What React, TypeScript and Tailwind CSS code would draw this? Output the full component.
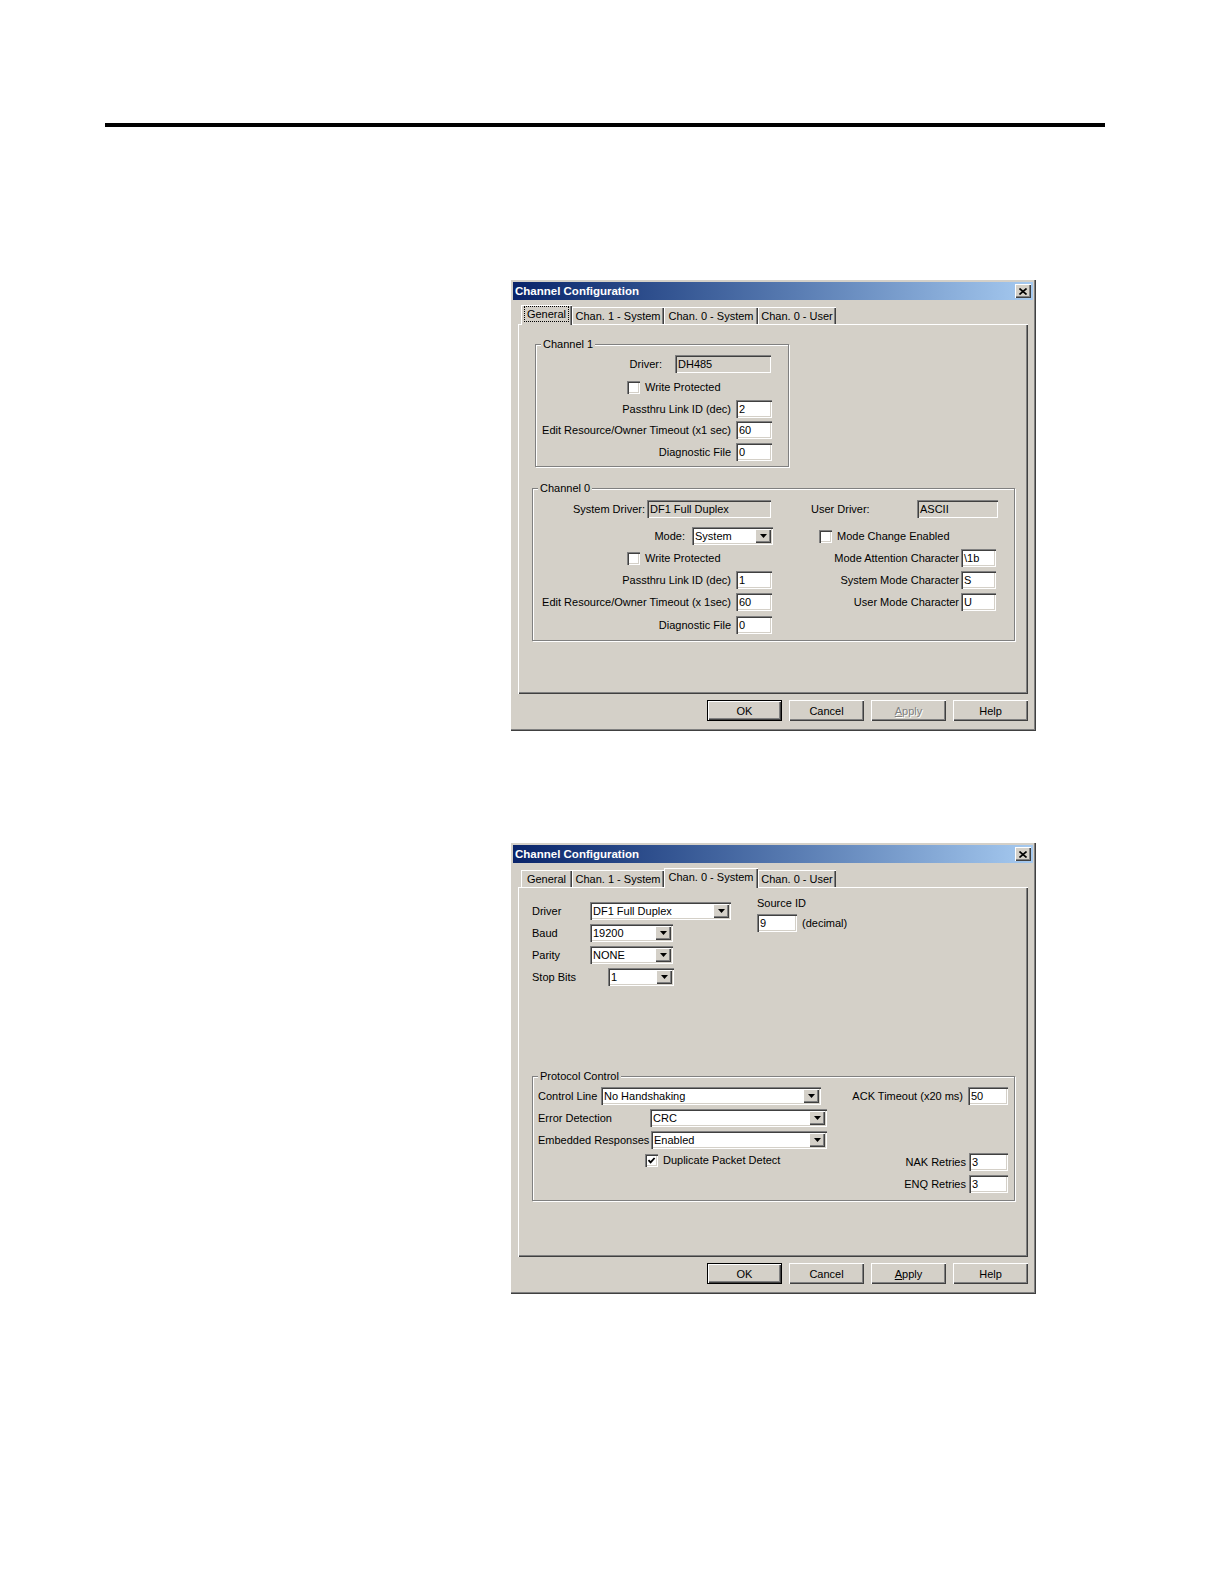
import type { ReactNode } from 'react';

const RAISED =
  'shadow-[inset_1px_1px_0_#ffffff,inset_-1px_-1px_0_#404040,inset_-2px_-2px_0_#808080]';
const SUNKEN =
  'shadow-[inset_1px_1px_0_#808080,inset_2px_2px_0_#404040,inset_-1px_-1px_0_#ffffff,inset_-2px_-2px_0_#d4d0c8]';

const TABS = [
  { label: 'General', w: 'w-[51px]' },
  { label: 'Chan. 1 - System', w: 'w-[92px]' },
  { label: 'Chan. 0 - System', w: 'w-[94px]' },
  { label: 'Chan. 0 - User', w: 'w-[78px]' },
];

function TextField({ value, w, disabled }: { value: string; w: string; disabled?: boolean }) {
  return (
    <div
      className={`h-[18px] ${w} ${SUNKEN} ${disabled ? 'bg-[#d4d0c8]' : 'bg-white'} flex items-center pl-[3px] shrink-0`}
    >
      {value}
    </div>
  );
}

function DropArrow() {
  return (
    <div className={`w-[16px] h-[14px] mr-[2px] bg-[#d4d0c8] ${RAISED} flex items-center justify-center shrink-0`}>
      <svg width="7" height="4" viewBox="0 0 7 4">
        <path d="M0 0h7L3.5 4z" fill="#000" />
      </svg>
    </div>
  );
}

function Select({ value, w }: { value: string; w: string }) {
  return (
    <div className={`h-[18px] ${w} ${SUNKEN} bg-white flex items-center pl-[3px] shrink-0`}>
      <span className="flex-1 truncate">{value}</span>
      <DropArrow />
    </div>
  );
}

function Checkbox({ checked, label }: { checked?: boolean; label: string }) {
  return (
    <div className="flex items-center gap-[5px]">
      <div className={`w-[13px] h-[13px] bg-white ${SUNKEN} flex items-center justify-center`}>
        {checked && (
          <svg width="9" height="9" viewBox="0 0 9 9">
            <path d="M1.5 4.2L3.6 6.4L7.6 2" fill="none" stroke="#000" strokeWidth="1.8" />
          </svg>
        )}
      </div>
      <span>{label}</span>
    </div>
  );
}

function GroupBox({ title, className, children }: { title: string; className: string; children: ReactNode }) {
  return (
    <div
      className={`relative border border-[#808080] shadow-[inset_1px_1px_0_#ffffff,1px_1px_0_#ffffff] ${className}`}
    >
      <span className="absolute -top-[8px] left-[5px] px-[2px] bg-[#d4d0c8] leading-[14px]">{title}</span>
      {children}
    </div>
  );
}

function Button({ label, isDefault, disabled }: { label: ReactNode; isDefault?: boolean; disabled?: boolean }) {
  return (
    <div
      className={`w-[75px] h-[21px] flex items-center justify-center bg-[#d4d0c8] ${RAISED} ${
        isDefault ? 'border border-black' : ''
      } ${disabled ? 'text-[#808080] [text-shadow:1px_1px_0_#ffffff]' : ''}`}
    >
      {label}
    </div>
  );
}

function Dialog({ active, applyEnabled, children }: { active: number; applyEnabled?: boolean; children: ReactNode }) {
  return (
    <div className={`w-[526px] h-[452px] bg-[#d4d0c8] p-[3px] flex flex-col ${RAISED}`}>
      <div className="h-[18px] bg-linear-to-r from-[#0a246a] to-[#a6caf0] flex items-center pl-[2px]">
        <span className="text-white font-bold text-[11.5px]">Channel Configuration</span>
        <div className={`ml-auto mr-[2px] w-[16px] h-[14px] bg-[#d4d0c8] ${RAISED} flex items-center justify-center`}>
          <svg width="8" height="7" viewBox="0 0 8 7">
            <path d="M0.5 0.5L7.5 6.5M7.5 0.5L0.5 6.5" stroke="#000" strokeWidth="1.6" />
          </svg>
        </div>
      </div>

      <div className="mt-[7px] ml-[8px] h-[17px] flex items-end relative z-10">
        {TABS.map((t, i) => (
          <div
            key={t.label}
            className={`${t.w} flex items-center justify-center bg-[#d4d0c8] shadow-[inset_1px_1px_0_#ffffff,inset_-1px_0_0_#404040,inset_-2px_0_0_#808080] ${
              i === active ? 'h-[20px] -mb-[1px] pb-[3px]' : 'h-[17px]'
            }`}
          >
            <span className={i === active && active === 0 ? 'outline-1 outline-dotted outline-black px-[2px]' : ''}>
              {t.label}
            </span>
          </div>
        ))}
      </div>

      <div className={`ml-[5px] w-[510px] h-[370px] flex flex-col ${RAISED}`}>{children}</div>

      <div className="mt-[6px] w-[515px] flex justify-end gap-[7px]">
        <Button label="OK" isDefault />
        <Button label="Cancel" />
        <Button
          label={
            <span>
              <span className="underline">A</span>pply
            </span>
          }
          disabled={!applyEnabled}
        />
        <Button label="Help" />
      </div>
    </div>
  );
}

function GeneralPage() {
  return (
    <>
      <GroupBox title="Channel 1" className="mt-[20px] ml-[17px] w-[254px] h-[123px]">
        <div className="mt-[10px] flex items-center">
          <div className="w-[126px] text-right">Driver:</div>
          <div className="ml-[13px]">
            <TextField value="DH485" w="w-[96px]" disabled />
          </div>
        </div>
        <div className="mt-[5px] h-[18px] flex items-center ml-[91px]">
          <Checkbox label="Write Protected" />
        </div>
        <div className="mt-[4px] flex items-center">
          <div className="w-[195px] text-right">Passthru Link ID (dec)</div>
          <div className="ml-[5px]">
            <TextField value="2" w="w-[36px]" />
          </div>
        </div>
        <div className="mt-[3px] flex items-center">
          <div className="w-[195px] text-right whitespace-nowrap">Edit Resource/Owner Timeout (x1 sec)</div>
          <div className="ml-[5px]">
            <TextField value="60" w="w-[36px]" />
          </div>
        </div>
        <div className="mt-[4px] flex items-center">
          <div className="w-[195px] text-right">Diagnostic File</div>
          <div className="ml-[5px]">
            <TextField value="0" w="w-[36px]" />
          </div>
        </div>
      </GroupBox>

      <GroupBox title="Channel 0" className="mt-[21px] ml-[14px] w-[483px] h-[153px]">
        <div className="mt-[11px] flex items-center">
          <div className="w-[278px] flex items-center">
            <div className="w-[112px] text-right">System Driver:</div>
            <div className="ml-[2px]">
              <TextField value="DF1 Full Duplex" w="w-[124px]" disabled />
            </div>
          </div>
          <div className="w-[106px]">User Driver:</div>
          <TextField value="ASCII" w="w-[81px]" disabled />
        </div>

        <div className="mt-[9px] flex items-center">
          <div className="w-[278px] flex items-center">
            <div className="w-[152px] text-right">Mode:</div>
            <div className="ml-[7px]">
              <Select value="System" w="w-[81px]" />
            </div>
          </div>
          <div className="ml-[8px]">
            <Checkbox label="Mode Change Enabled" />
          </div>
        </div>

        <div className="mt-[4px] flex items-center">
          <div className="w-[278px] flex items-center pl-[94px]">
            <Checkbox label="Write Protected" />
          </div>
          <div className="w-[148px] text-right whitespace-nowrap">Mode Attention Character</div>
          <div className="ml-[2px]">
            <TextField value="\1b" w="w-[35px]" />
          </div>
        </div>

        <div className="mt-[4px] flex items-center">
          <div className="w-[278px] flex items-center">
            <div className="w-[198px] text-right">Passthru Link ID (dec)</div>
            <div className="ml-[5px]">
              <TextField value="1" w="w-[36px]" />
            </div>
          </div>
          <div className="w-[148px] text-right">System Mode Character</div>
          <div className="ml-[2px]">
            <TextField value="S" w="w-[35px]" />
          </div>
        </div>

        <div className="mt-[4px] flex items-center">
          <div className="w-[278px] flex items-center">
            <div className="w-[198px] text-right whitespace-nowrap">Edit Resource/Owner Timeout (x 1sec)</div>
            <div className="ml-[5px]">
              <TextField value="60" w="w-[36px]" />
            </div>
          </div>
          <div className="w-[148px] text-right">User Mode Character</div>
          <div className="ml-[2px]">
            <TextField value="U" w="w-[35px]" />
          </div>
        </div>

        <div className="mt-[5px] flex items-center">
          <div className="w-[198px] text-right">Diagnostic File</div>
          <div className="ml-[5px]">
            <TextField value="0" w="w-[36px]" />
          </div>
        </div>
      </GroupBox>
    </>
  );
}

function Chan0SystemPage() {
  return (
    <>
      <div className="mt-[10px] ml-[14px] flex">
        <div className="w-[225px] mt-[5px] flex flex-col gap-[4px]">
          <div className="flex items-center">
            <div className="w-[58px]">Driver</div>
            <Select value="DF1 Full Duplex" w="w-[141px]" />
          </div>
          <div className="flex items-center">
            <div className="w-[58px]">Baud</div>
            <Select value="19200" w="w-[83px]" />
          </div>
          <div className="flex items-center">
            <div className="w-[58px]">Parity</div>
            <Select value="NONE" w="w-[83px]" />
          </div>
          <div className="flex items-center">
            <div className="w-[76px]">Stop Bits</div>
            <Select value="1" w="w-[66px]" />
          </div>
        </div>
        <div className="flex flex-col">
          <div className="leading-[13px]">Source ID</div>
          <div className="mt-[4px] flex items-center gap-[5px]">
            <TextField value="9" w="w-[40px]" />
            <span>(decimal)</span>
          </div>
        </div>
      </div>

      <GroupBox title="Protocol Control" className="mt-[90px] ml-[14px] w-[483px] h-[125px]">
        <div className="mt-[10px] flex items-center pr-[6px]">
          <div className="w-[68px] pl-[5px]">Control Line</div>
          <Select value="No Handshaking" w="w-[220px]" />
          <div className="ml-auto">ACK Timeout (x20 ms)</div>
          <div className="ml-[5px]">
            <TextField value="50" w="w-[40px]" />
          </div>
        </div>
        <div className="mt-[4px] flex items-center">
          <div className="w-[117px] pl-[5px]">Error Detection</div>
          <Select value="CRC" w="w-[177px]" />
        </div>
        <div className="mt-[4px] flex items-center">
          <div className="w-[118px] pl-[5px] whitespace-nowrap">Embedded Responses</div>
          <Select value="Enabled" w="w-[176px]" />
        </div>
        <div className="mt-[4px] flex items-center pr-[6px]">
          <div className="ml-[112px] self-start">
            <Checkbox checked label="Duplicate Packet Detect" />
          </div>
          <div className="ml-auto">NAK Retries</div>
          <div className="ml-[3px]">
            <TextField value="3" w="w-[39px]" />
          </div>
        </div>
        <div className="mt-[4px] flex items-center justify-end pr-[6px]">
          <div>ENQ Retries</div>
          <div className="ml-[3px]">
            <TextField value="3" w="w-[39px]" />
          </div>
        </div>
      </GroupBox>
    </>
  );
}

export default function App() {
  return (
    <div className="w-[1224px] h-[1584px] bg-white text-black text-[11px] leading-[14px] font-['Liberation_Sans',Arial,sans-serif] overflow-hidden">
      <div className="pt-[123px] pl-[105px] pr-[119px]">
        <div className="h-[4px] bg-black" />
      </div>

      <div className="mt-[152px] ml-[510px]">
        <Dialog active={0}>
          <GeneralPage />
        </Dialog>
      </div>

      <div className="mt-[111px] ml-[510px]">
        <Dialog active={2} applyEnabled>
          <Chan0SystemPage />
        </Dialog>
      </div>
    </div>
  );
}
